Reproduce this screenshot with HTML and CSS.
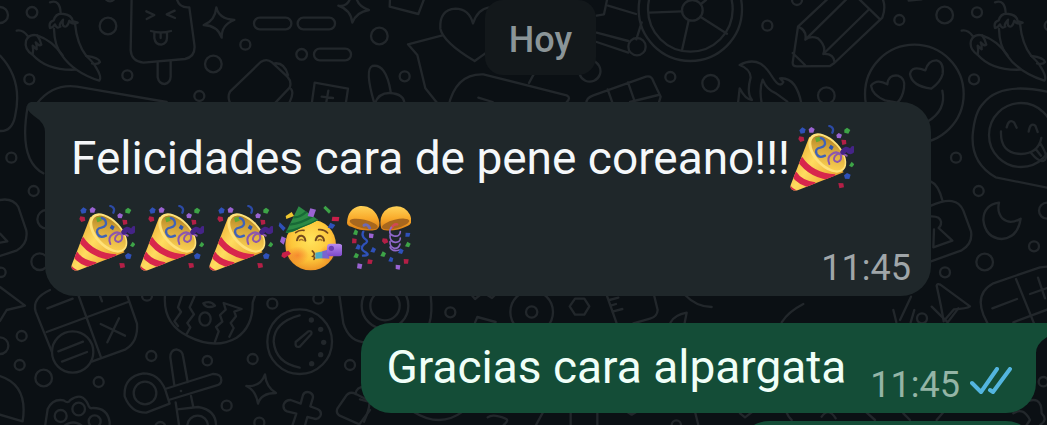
FILE: index.html
```html
<!DOCTYPE html>
<html lang="es">
<head>
    <meta charset="UTF-8">
    <title>Chat</title>
    <meta name="viewport" content="width=device-width, initial-scale=1.0">
    <link rel="stylesheet" href="styles.css">
</head>
<body>

    <!-- Shared drawings: emoji and repeated doodles -->
    <svg class="defs" aria-hidden="true">
        <defs>
            <linearGradient id="cone" x1="0" y1="0.2" x2="1" y2="0.9">
                <stop offset="0" stop-color="#e9a52a"/>
                <stop offset="0.4" stop-color="#ffdc60"/>
                <stop offset="1" stop-color="#e3921f"/>
            </linearGradient>
            <linearGradient id="mouth" x1="0" y1="0" x2="1" y2="0.7">
                <stop offset="0" stop-color="#a07218"/>
                <stop offset="0.45" stop-color="#d3a438"/>
                <stop offset="1" stop-color="#fbd052"/>
            </linearGradient>
            <radialGradient id="face" cx="0.5" cy="0.4" r="0.6">
                <stop offset="0" stop-color="#ffe45c"/>
                <stop offset="0.65" stop-color="#fdc63a"/>
                <stop offset="1" stop-color="#ee9526"/>
            </radialGradient>
            <radialGradient id="blush">
                <stop offset="0" stop-color="#f4702a" stop-opacity="0.7"/>
                <stop offset="1" stop-color="#f4702a" stop-opacity="0"/>
            </radialGradient>
            <linearGradient id="dome" x1="0" y1="0" x2="0" y2="1">
                <stop offset="0" stop-color="#ffd257"/>
                <stop offset="0.5" stop-color="#f9ab2c"/>
                <stop offset="1" stop-color="#d97a12"/>
            </linearGradient>
            <linearGradient id="horn" x1="0" y1="0" x2="0" y2="1">
                <stop offset="0" stop-color="#b98bf0"/>
                <stop offset="1" stop-color="#7d48c8"/>
            </linearGradient>
            <clipPath id="cone-clip">
                <path d="M91 62 L35 207 Q32 218 41 222 Q48 225 58 222 L194 169 Z"/>
            </clipPath>
            <clipPath id="hat-clip">
                <path d="M86 31 L47 110 Q60 114 92 96 Q124 84 145 72 Z"/>
            </clipPath>
        </defs>

        <symbol id="popper" viewBox="33 27 192 198">
            <path fill="url(#cone)" d="M91 62 L35 207 Q32 218 41 222 Q48 225 58 222 L194 169 Z"/>
            <g clip-path="url(#cone-clip)" fill="none" stroke="#d8264c" stroke-width="19">
                <path d="M62 128 Q96 180 168 184"/>
                <path d="M44 172 Q62 202 108 208"/>
                <path stroke-width="9" d="M30 211 Q38 222 56 230"/>
            </g>
            <ellipse cx="145" cy="111" rx="71" ry="41" transform="rotate(47 145 111)" fill="#ffe27a"/>
            <ellipse cx="147" cy="111" rx="64" ry="34" transform="rotate(47 147 111)" fill="url(#mouth)"/>
            <g fill="none" stroke-linecap="round">
                <path stroke="#3f62b8" stroke-width="7" d="M138 119 Q120 128 113 114 Q106 98 124 95 Q142 91 137 76 Q134 67 124 66"/>
                <path stroke="#8d57ad" stroke-width="6" d="M151 144 Q143 124 157 115 Q173 103 185 116 Q191 133 175 138 Q159 135 168 120 Q180 105 203 119"/>
                <path stroke="#452487" stroke-width="16" d="M192 108 Q201 94 210 105 Q217 110 222 98"/>
                <path stroke="#2c4aa5" stroke-width="7" d="M151 30 Q167 35 160 50"/>
            </g>
            <path fill="#62a832" d="M108 65 l13 -3 4 12 -13 5z"/>
            <path fill="#2e55b0" d="M155 86 l9 6 -5 11 -10 -7z"/>
            <g fill="#2f51b9">
                <path d="M70 34 l10 6 -3 11 -12 2 -4 -10z"/>
                <path d="M204 171 l11 5 -4 13 -13 -1 -3 -10z"/>
            </g>
            <g fill="#9a63d2">
                <path d="M97 33 l10 6 -4 11 -12 0 -2 -10z"/>
                <path d="M179 51 l10 5 -4 11 -11 -1 -2 -9z"/>
            </g>
            <g fill="#b31f46">
                <path d="M61 61 l13 2 2 11 -12 4 -6 -9z"/>
                <path d="M187 71 l14 1 1 12 -12 3z"/>
                <path d="M178 201 l15 1 2 12 -14 3z"/>
            </g>
            <g fill="#3da447">
                <path d="M204 35 l10 7 -6 11 -12 -3 0 -9z"/>
                <path d="M218 137 l8 8 -7 9 -9 -5z"/>
            </g>
        </symbol>

        <symbol id="party-face" viewBox="24 27 192 198">
            <circle cx="122" cy="147" r="76" fill="url(#face)"/>
            <ellipse cx="83" cy="178" rx="34" ry="27" fill="url(#blush)"/>
            <ellipse cx="171" cy="174" rx="25" ry="26" fill="url(#blush)"/>
            <path fill="#2c8a45" d="M86 31 L47 110 Q60 114 92 96 Q124 84 145 72 Z"/>
            <g clip-path="url(#hat-clip)" fill="none" stroke="#176836" stroke-width="7">
                <path d="M70 64 Q91 65 111 45"/>
                <path d="M58 86 Q95 83 132 58"/>
                <path d="M48 107 Q99 98 145 72"/>
            </g>
            <g fill="none" stroke="#74491e" stroke-linecap="round" stroke-width="5">
                <path d="M77 110 Q87 101 102 103"/>
                <path d="M146 101 Q162 99 173 111"/>
                <path stroke-width="6" d="M81 133 Q84 118 95 119 Q105 121 106 134"/>
                <path stroke-width="6" d="M137 133 Q140 119 150 119 Q161 121 162 134"/>
                <path d="M127 165 Q138 174 129 181 Q137 183 132 190"/>
            </g>
            <path d="M87 134 Q94 127 101 134 M143 134 Q150 127 157 134" fill="none" stroke="#a9762a" stroke-width="4"/>
            <path fill="#4ea9c4" d="M136 170 L161 166 V187 L136 188z"/>
            <path fill="#7965cf" d="M157 166 L178 160 V188 L157 187z"/>
            <rect x="171" y="143" width="46" height="38" rx="10" fill="url(#horn)"/>
            <circle cx="184" cy="157" r="8" fill="#6d3fb3"/>
            <g fill="#9a63d2">
                <path d="M121 37 l17 4 -8 23 -17 -4z"/>
                <path d="M35 121 l13 6 -7 19 -11 -9z"/>
            </g>
            <path fill="#3da447" d="M166 29 l17 16 -6 8 -17 -17z"/>
            <path fill="#eec72f" d="M47 60 l18 -12 7 12 -23 9z"/>
            <g fill="#c81f49">
                <path d="M187 62 l21 1 -2 13 -21 -1z"/>
                <path d="M37 170 l18 -6 8 9 -20 14 -9 -6z"/>
            </g>
            <g fill="#2f51b9">
                <path d="M29 79 l18 17 -7 9 -14 -15z"/>
                <path d="M181 80 l15 7 -8 11 -15 -3z"/>
            </g>
        </symbol>

        <symbol id="ball" viewBox="231 27 192 198">
            <path fill="url(#dome)" d="M231 80 Q233 38 270 30 Q312 28 326 70 Q333 94 319 101 Q283 109 244 92 Q231 89 231 80z"/>
            <ellipse cx="281" cy="84" rx="43" ry="13" transform="rotate(13 281 84)" fill="#a7671e"/>
            <path fill="url(#dome)" d="M333 94 Q325 54 356 36 Q398 20 420 56 Q430 84 414 89 Q377 107 346 103 Q334 102 333 94z"/>
            <ellipse cx="377" cy="84" rx="42" ry="13" transform="rotate(-14 377 84)" fill="#a7671e"/>
            <g fill="none" stroke-linecap="round">
                <path stroke="#6f69b4" stroke-width="9" d="M282 88 Q291 82 299 96"/>
                <path stroke="#2f51b9" stroke-width="7" d="M280 107 Q273 120 287 130 Q297 137 282 145 Q267 159 287 169 Q302 179 279 179"/>
                <path stroke="#d14a52" stroke-width="7" d="M365 96 Q370 83 382 85"/>
                <path stroke="#9068ca" stroke-width="5" d="M364 94 Q351 113 372 120 Q390 123 391 107 M360 117 Q359 137 375 139 Q391 140 391 126 M360 137 Q359 153 373 157 Q387 158 390 144 M360 153 Q365 168 388 162"/>
            </g>
            <g fill="#3da447">
                <path d="M255 100 l9 6 -3 12 -12 -3z"/><path d="M257 170 l10 6 -5 11 -12 -3z"/><path d="M338 166 l10 6 -5 11 -12 -3z"/><path d="M412 137 l10 6 -5 11 -12 -3z"/>
            </g>
            <g fill="#b31f46">
                <path d="M247 127 l13 2 -1 13 -13 0z"/><path d="M294 190 l14 2 -3 12 -13 -1z"/><path d="M338 127 l13 1 4 11 -12 5 -7 -8z"/><path d="M401 189 l15 1 -2 13 -12 0z"/>
            </g>
            <g fill="#2f51b9">
                <path d="M263 144 l9 5 -4 12 -12 -3z"/><path d="M308 153 l10 6 -5 11 -12 -3z"/><path d="M391 157 l10 6 -5 11 -12 -3z"/><path d="M361 182 l9 5 -3 11 -12 -2z"/><path d="M407 110 l14 1 -3 11 -12 0z"/>
            </g>
            <g fill="#9a63d2">
                <path d="M297 112 l14 2 -2 13 -12 -2z"/><path d="M263 202 l14 3 -3 14 -13 -2z"/><path d="M377 206 l14 2 -2 13 -12 -2z"/>
            </g>
        </symbol>

        <symbol id="chillies" viewBox="0 0 340 260" overflow="visible">
            <path d="M150 7 Q180 -3 182 39 M150 84 Q145 66 161 61 Q168 37 192 42 Q215 45 218 63 L233 68 Q216 76 208 62 Q201 88 189 76 Q187 66 189 59 Q175 75 181 80 Q170 88 165 73 Q160 82 150 84z"/>
            <path d="M162 87 Q163 137 186 166 Q222 218 298 242 Q307 233 288 202 Q280 187 259 168 Q231 133 225 71"/>
            <path d="M50 92 Q68 88 83 108 M98 164 Q72 148 78 122 Q87 101 111 106 Q157 121 188 166 M98 164 Q140 212 226 209"/>
            <path d="M98 164 Q101 150 98 137 L110 148 Q111 135 107 127 Q118 140 124 134 Q121 119 111 106"/>
            <path d="M259 168 Q296 172 300 186 Q294 195 276 190"/>
        </symbol>
    </svg>

    <!-- Chat wallpaper -->
    <svg class="wallpaper" viewBox="0 0 3141 1275" preserveAspectRatio="xMidYMin slice" aria-hidden="true">
        <use href="#chillies" width="340" height="260"/>
        <use href="#chillies" x="2835" width="340" height="260"/>

        <!-- top left: lolly, sparkle, bag, boot -->
        <path d="M395 -10 L392 150 Q394 184 430 188 L555 177 Q588 170 583 133 L568 22 Q538 25 530 -4"/>
        <path d="M473 187 V232 Q477 252 494 252 Q511 249 512 230 V183 M439 34 L463 45 L440 57 M524 32 L500 43 L525 54 M453 93 Q482 102 513 93 M463 98 V114 Q466 134 484 134 Q501 131 501 112 V97 M482 99 V114"/>
        <path d="M649 22 Q656 57 703 60 Q664 74 665 113 Q653 77 611 75 Q645 63 649 22z"/>
        <rect x="762" y="53" width="112" height="35" rx="17"/>
        <rect x="893" y="53" width="112" height="35" rx="17"/>
        <rect x="942" y="146" width="111" height="35" rx="17"/>
        <path d="M697 320 Q679 295 690 275 L782 186 Q800 174 816 187 L862 230 Q876 245 869 263 L815 320 M824 190 Q853 187 864 225 M874 268 Q882 280 869 306 M934 320 L944 248 L1044 266 L1036 320 M985 272 L979 306 M965 290 L999 294"/>
        <path d="M0 167 Q70 240 45 350 Q35 395 0 393 M112 309 Q160 250 231 260 L500 306 M83 320 Q55 480 130 520"/>

        <!-- top middle -->
        <path d="M1015 17 Q1044 22 1052 -10 M1015 17 Q1053 30 1057 68 Q1069 36 1107 30 Q1076 20 1069 -5 M1170 -5 L1169 20 L1255 42 L1273 -5"/>
        <path d="M1424 183 Q1330 127 1321 86 Q1318 29 1366 26 Q1407 27 1419 70 Q1433 27 1468 22 M1424 183 L1460 157"/>
        <path d="M1327 106 L1224 133 L1252 165 L1276 265 L1312 310 M1345 320 Q1367 220 1450 223 L1700 286 Q1714 293 1700 306 M1435 293 L1478 306 M1601 223 L1587 249"/>
        <path d="M1123 310 Q1093 208 1117 198 Q1158 190 1172 275 M1125 310 Q1136 278 1170 279 Q1212 282 1213 310"/>
        <path d="M1752 186 A32 32 0 1 1 1739 223 M1790 98 L1885 123 M1790 126 L1885 158 M1822 -5 L1812 43 L1790 47 M1824 17 L1908 42 M1925 67 L1909 118"/>
        <circle cx="1911" cy="140" r="26"/>
        <circle cx="2071" cy="28" r="155"/>
        <circle cx="2071" cy="28" r="127"/>
        <circle cx="2077" cy="31" r="31"/>
        <path d="M2046 34 L1948 38 M2066 61 L2046 151 M2101 50 L2181 101 M2103 12 L2118 0"/>
        <path d="M1760 310 Q1756 295 1780 286 L1938 230 Q1955 226 1960 244 L1982 290 L1976 310 M1823 268 L1838 310 M1884 247 L1906 310 M1890 306 L1975 285"/>

        <!-- top right: pencil, flame, heart eyes -->
        <g transform="translate(2070 0)">
            <path d="M420 -10 L324 80 L308 188 Q308 199 321 199 L420 198 L433 189 L577 53 Q590 18 575 -10 M324 80 Q352 92 346 119 L472 -5 M346 119 Q362 106 384 115 Q410 138 400 162 Q432 160 434 188 M400 162 L535 30 M505 -5 L567 55 M308 159 L345 195"/>
            <path d="M144 310 L149 265 Q166 299 186 300 Q169 280 182 232 Q180 206 149 195 Q183 176 212 191 Q229 202 247 231 Q270 267 280 246 L270 235 Q318 230 334 310 M215 310 Q207 265 218 239 Q230 270 258 280 L292 305"/>
            <circle cx="673" cy="282" r="148"/>
            <path d="M585 301 Q547 286 543 257 Q560 235 592 253 Q595 223 624 227 Q647 235 642 264 Q638 292 622 308z M724 266 Q665 258 660 222 Q665 195 706 211 Q715 180 740 181 Q762 186 758 222 Q752 246 724 266z M757 272 Q770 330 712 365"/>
            <path d="M656 2 L695 -2"/>
        </g>

        <!-- left edge -->
        <path d="M0 600 Q38 593 55 621 L79 692 Q85 732 49 752 L0 768 M0 701 L22 724 L0 728 M0 861 L75 917 L20 930 L0 963"/>
        <circle cx="140" cy="658" r="28"/>

        <!-- right edge -->
        <g transform="translate(2700 270)">
            <path d="M441 5 Q300 -25 250 40 Q224 65 218 135 Q213 220 287 262 L441 293"/>
            <circle cx="363" cy="135" r="96"/>
            <path d="M303 124 Q300 190 363 192 Q415 190 424 144 M320 112 Q327 85 342 97 L350 113 M386 125 Q390 96 406 107 L413 126 M394 190 Q420 221 434 210 Q446 200 421 160 M407 177 L423 197"/>
            <path d="M93 275 Q115 284 127 331 M93 347 Q170 312 190 362 L213 424 Q219 461 185 481 L93 514 M93 379 Q120 378 123 395 Q124 408 116 414 L157 452 L100 472 L102 418"/>
            <path d="M297 338 Q251 345 250 390 Q256 443 305 447 Q354 443 362 386 Q330 405 308 386 Q290 366 297 338z"/>
            <path d="M441 530 L420 532 L280 580 Q225 610 250 674 L265 705 M348 567 L402 700 M277 655 L351 627 M414 563 L435 625 M390 612 L441 594 M340 697 L441 659"/>
            <path d="M110 587 Q112 580 121 584 L210 649 Q200 656 162 658 L131 694 Q124 650 110 587z M33 620 L0 690"/>
        </g>

        <!-- bottom left -->
        <g transform="translate(0 870)">
            <path d="M150 0 Q95 25 107 65 L155 184 M275 215 L377 178 Q415 155 411 101 L382 18 M235 15 L303 202 M140 126 L384 36 M142 55 L218 26 M300 18 L306 34 M302 102 L375 137 M357 85 L322 157"/>
            <circle cx="218" cy="186" r="62"/>
            <path d="M175 184 L249 155 M186 215 L261 186"/>
            <path d="M495 15 Q488 102 565 139 Q646 180 710 143 Q759 110 758 38 L766 15 M545 20 L534 52 L543 66 L523 94 L534 108 M583 20 L569 52 L582 73 L562 99 L571 112 L560 132 M645 155 L656 124 L648 111 L667 95 L660 75 L677 59 L671 39 L725 57 L703 65 L708 79 L692 99 L701 114 L688 140 M610 40 Q632 30 645 47 Q621 58 610 40z"/>
            <ellipse cx="615" cy="87" rx="17" ry="20"/>
            <circle cx="899" cy="155" r="97"/>
            <path d="M899 76 Q821 97 821 155 Q827 219 899 233 M887 156 L925 124 Q937 121 934 132 L899 170 Q884 174 887 156z"/>
            <g class="filled">
                <circle cx="934" cy="90" r="8"/><circle cx="962" cy="118" r="8"/><circle cx="971" cy="157" r="8"/><circle cx="962" cy="194" r="8"/><circle cx="935" cy="221" r="8"/><circle cx="543" cy="303" r="4"/>
            </g>
            <path d="M509 341 L439 368 Q393 369 374 319 Q370 260 430 250 Q475 250 495 297z M495 297 L638 252 Q664 251 664 271 Q663 283 650 286 L506 330 M523 286 L511 202 Q511 180 529 178 Q547 181 549 198 L563 276 M573 318 L580 352 M527 337 L537 405 M532 358 L594 351 Q650 360 648 410"/>
            <circle cx="435" cy="309" r="34"/>
            <circle cx="593" cy="408" r="31"/>
            <path d="M795 253 Q798 291 828 309 Q783 309 774 341 Q767 300 739 288 Q782 291 795 253z"/>
            <path d="M902 341 L909 315 Q914 303 929 307 Q942 313 938 326 L931 349 L952 357 Q967 364 961 378 Q953 391 940 385 L922 381 L914 410 M902 341 L872 330 Q856 330 851 344 Q848 359 861 364 L889 371 L876 410"/>
            <path d="M1068 312 Q1047 301 1036 321 L1012 356 Q1007 370 1019 377 L1078 403 L1110 360 M1068 312 L1110 334 M1066 312 Q1070 290 1095 290"/>
            <path d="M135 410 L143 357 Q158 325 191 331 Q205 342 211 330 Q247 305 264 343 Q269 358 278 354 Q322 353 329 396 V410 M190 410 Q220 385 249 410"/>
            <circle cx="182" cy="378" r="18"/><circle cx="236" cy="357" r="19"/><circle cx="284" cy="394" r="18"/>
            <path d="M0 258 Q85 285 68 394 L0 374 M1018 15 L1030 100 Q1048 157 1100 157"/>
        </g>

        <!-- strip between the two messages and under the second one -->
        <g transform="translate(1080 855)">
            <circle cx="75" cy="62" r="44"/><circle cx="75" cy="62" r="70"/>
            <path d="M212 30 Q218 85 208 115 M345 113 L352 96 L407 111 M335 30 L345 42 L360 30 M382 30 L396 39 L405 30"/>
            <circle cx="515" cy="81" r="64"/>
            <path d="M645 41 H673 L688 64 L673 89 H645 L629 64z M740 30 L770 115 M748 45 L775 38 M752 62 L768 57 M757 80 L787 72 M882 30 L893 75 Q892 95 870 101 L820 115 M931 113 Q943 90 980 83 L974 113 M975 30 Q1010 66 1055 66"/>
            <path d="M0 343 L28 351 Q30 369 12 410 M160 380 Q240 430 308 380 M383 397 Q398 385 435 400 Q450 405 431 420 M550 380 L528 420 M632 380 V420 M712 385 V420 M801 380 L815 389 L830 380 M1005 380 L1015 420"/>
        </g>
        <g transform="translate(2220 930)">
            <path d="M125 37 Q145 5 190 -18 M460 0 L469 37 M523 0 L512 37 M575 -10 L623 37 L655 -5"/>
            <path d="M850 280 Q905 250 905 310 Q925 330 900 345 M820 310 Q850 290 870 330 L860 345"/>
            <circle cx="910" cy="215" r="14"/>
            <path d="M0 310 L15 322 L35 307 M140 308 Q145 322 155 330 M245 320 Q265 290 287 325 M380 308 L405 330 M490 310 L510 330 M610 307 L590 330"/>
        </g>

        <!-- big dots -->
        <g>
            <circle cx="0" cy="45" r="24"/><circle cx="324" cy="78" r="25"/><circle cx="640" cy="192" r="25"/><circle cx="1138" cy="108" r="25"/>
            <circle cx="2132" cy="250" r="25"/><circle cx="2479" cy="287" r="25"/><circle cx="2834" cy="45" r="25"/><circle cx="119" cy="785" r="25"/>
            <circle cx="131" cy="1134" r="25"/><circle cx="0" cy="1037" r="25"/><circle cx="2954" cy="786" r="25"/><circle cx="3141" cy="632" r="24"/>
        </g>
        <!-- small dots -->
        <g>
            <circle cx="96" cy="37" r="16"/><circle cx="88" cy="238" r="15"/><circle cx="382" cy="226" r="15"/><circle cx="330" cy="-12" r="16"/>
            <circle cx="736" cy="134" r="15"/><circle cx="905" cy="163" r="16"/><circle cx="598" cy="288" r="15"/><circle cx="1214" cy="229" r="15"/>
            <circle cx="2011" cy="231" r="15"/><circle cx="2302" cy="77" r="15"/><circle cx="2391" cy="0" r="15"/><circle cx="2698" cy="60" r="15"/>
            <circle cx="2931" cy="37" r="15"/><circle cx="2922" cy="238" r="15"/><circle cx="3148" cy="77" r="14"/>
            <circle cx="34" cy="473" r="15"/><circle cx="101" cy="573" r="15"/><circle cx="3" cy="817" r="14"/>
            <circle cx="2868" cy="473" r="15"/><circle cx="2936" cy="573" r="15"/><circle cx="3102" cy="739" r="15"/><circle cx="2835" cy="817" r="15"/><circle cx="2766" cy="955" r="15"/>
            <circle cx="65" cy="1008" r="15"/><circle cx="59" cy="1095" r="15"/><circle cx="296" cy="1146" r="15"/><circle cx="454" cy="1068" r="15"/>
            <circle cx="622" cy="1082" r="14"/><circle cx="758" cy="1077" r="15"/><circle cx="817" cy="911" r="15"/><circle cx="955" cy="896" r="15"/>
            <circle cx="680" cy="1217" r="15"/><circle cx="1050" cy="1095" r="15"/><circle cx="441" cy="887" r="15"/><circle cx="778" cy="1268" r="15"/><circle cx="481" cy="1281" r="15"/>
            <circle cx="1351" cy="937" r="15"/><circle cx="1595" cy="936" r="17"/><circle cx="2029" cy="1275" r="14"/>
        </g>
    </svg>

    <main class="chat">
        <div class="day">Hoy</div>

        <article class="message received">
            <svg class="tail" viewBox="0 0 19 30" aria-hidden="true"><path d="M19 0 H4 Q-2 2 1 8 Q3 11 7 14 Q18 21 18 30 H19z"/></svg>
            <p class="text">Felicidades cara de pene coreano!!!<svg class="emoji" role="img" aria-label="Confeti"><use href="#popper"/></svg><wbr><svg class="emoji" role="img" aria-label="Confeti"><use href="#popper"/></svg><svg class="emoji" role="img" aria-label="Confeti"><use href="#popper"/></svg><svg class="emoji" role="img" aria-label="Confeti"><use href="#popper"/></svg><svg class="emoji" role="img" aria-label="Cara de fiesta"><use href="#party-face"/></svg><svg class="emoji" role="img" aria-label="Bola de confeti"><use href="#ball"/></svg></p>
            <div class="meta"><time>11:45</time></div>
        </article>

        <article class="message sent">
            <svg class="tail" viewBox="0 0 19 30" aria-hidden="true"><path d="M0 0 H15 Q21 2 18 8 Q16 11 12 14 Q1 21 1 30 H0z"/></svg>
            <p class="text">Gracias cara alpargata</p>
            <div class="meta">
                <time>11:45</time>
                <svg class="checks" viewBox="0 0 42 28" role="img" aria-label="Leído"><path d="M2 16 L11 25 L27 2 M20 23 L23 25 L40 2"/></svg>
            </div>
        </article>

        <article class="message sent next"></article>
    </main>

</body>
</html>
```

FILE: styles.css
```css
* {
    box-sizing: border-box;
}

body {
    margin: 0;
    background-color: #0b1014;
    font-family: Roboto, "Liberation Sans", sans-serif;
}

.defs {
    position: absolute;
    width: 0;
    height: 0;
}

/* Doodles sit behind the whole conversation */
.wallpaper {
    position: absolute;
    top: 0;
    left: 0;
    width: 100%;
    height: 100%;
    fill: none;
    stroke: #22272b;
    stroke-width: 7;
    stroke-linecap: round;
    stroke-linejoin: round;
}

.wallpaper .filled {
    fill: #22272b;
    stroke: none;
}

.chat {
    position: relative;
    display: flex;
    flex-direction: column;
    height: 100vh;
    overflow: hidden;
    padding: 0 11px 0 45px;
}

.chat > * {
    flex-shrink: 0;
}

.day {
    align-self: center;
    margin-bottom: 27px;
    padding: 20px 24px 15px;
    border-radius: 18px;
    background-color: #13181b;
    color: #8b9598;
    font-size: 36px;
    font-weight: 500;
    line-height: 40px;
}

.message {
    position: relative;
    display: flex;
    align-items: flex-end;
    padding: 16px 24px 8px 26px;
    border-radius: 30px;
}

.text {
    margin: 0 0 10px;
    font-size: 46px;
    line-height: 56px;
}

.received {
    display: grid;
    margin-right: 105px;
    margin-bottom: 27px;
    padding-right: 20px;
    border-top-left-radius: 0;
    background-color: #1f272a;
    color: #f5f8fa;
}

/* The time shares the cell with the text, in its free corner */
.received .text,
.received .meta {
    grid-area: 1 / 1;
}

.received .text {
    line-height: 80px;
}

.sent {
    align-self: flex-end;
    gap: 24px;
    margin-bottom: 8px;
    border-top-right-radius: 0;
    background-color: #144d37;
    color: #f0fff8;
}

.next {
    width: 30%;
    height: 90px;
    border-radius: 30px;
}

.emoji {
    width: 64px;
    height: 66px;
    margin-right: 5px;
    vertical-align: -17px;
}

.meta {
    display: flex;
    align-items: center;
    align-self: end;
    justify-self: end;
    gap: 10px;
    color: #a0a6a9;
    font-size: 36px;
    line-height: 40px;
}

.sent .meta {
    color: #94b5a6;
}

.checks {
    width: 42px;
    height: 28px;
    margin-bottom: 8px;
    fill: none;
    stroke: #53b5df;
    stroke-width: 4;
    stroke-linecap: round;
    stroke-linejoin: round;
}

.tail {
    position: absolute;
    top: 0;
    width: 19px;
    height: 30px;
}

.received .tail {
    right: 100%;
    margin-right: -1px;
    fill: #1f272a;
}

.sent .tail {
    left: 100%;
    margin-left: -1px;
    fill: #144d37;
}
```
